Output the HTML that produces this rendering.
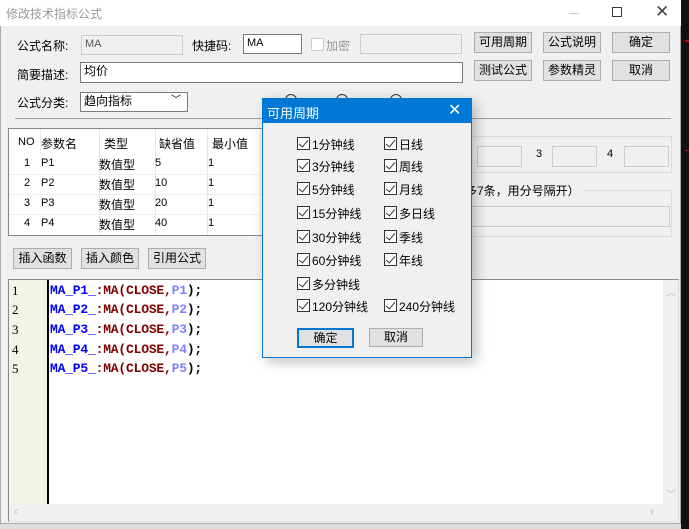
<!DOCTYPE html>
<html><head><meta charset="utf-8"><style>
*{margin:0;padding:0;box-sizing:border-box}
body{width:689px;height:529px;overflow:hidden;background:#2a2a2a;font-family:"Liberation Sans","Noto Sans CJK SC",sans-serif;font-size:12px;color:#000;position:relative}
.a{position:absolute}
.win{left:0;top:0;width:681px;height:524px;background:#f0f0f0;border:1px solid #aaa}
.tb{left:0;top:0;width:681px;height:26px;background:#fff}
.btn{position:absolute;background:#e1e1e1;border:1px solid #adadad;text-align:center;line-height:18px;font-size:12px}
.inp{position:absolute;border:1px solid #7a7a7a;background:#fff;font-size:11px;padding-left:3px;line-height:17px}
.dis{position:absolute;border:1px solid #ccc;background:#f0f0f0}
.lbl{position:absolute;font-size:12px;white-space:nowrap}
.t{position:absolute;font-size:11px;white-space:nowrap}
.cb{position:absolute;width:13px;height:13px;border:1px solid #333;background:#fff}
.cb::after{content:"";position:absolute;left:3px;top:0px;width:4px;height:8px;border:solid #333;border-width:0 1.5px 1.5px 0;transform:rotate(40deg)}
.code{position:absolute;left:50px;font-family:"Liberation Mono",monospace;font-weight:bold;font-size:13px;white-space:pre;letter-spacing:-0.2px}
.b{color:#0000ff}.r{color:#800000}.lb{color:#8080ff}
.ln{position:absolute;left:12px;font-family:"Liberation Serif",serif;font-size:13px}
</style></head><body>
<div class="a" style="left:681px;top:0;width:8px;height:529px;background:#111"></div>
<div class="a" style="left:685px;top:40px;width:4px;height:2px;background:#c00"></div>
<div class="a" style="left:685px;top:150px;width:4px;height:1px;background:#c00"></div>
<div class="a" style="left:0;top:524px;width:681px;height:5px;background:#ddd"></div>
<div class="a win"></div>
<div class="a tb"></div>
<div class="lbl" style="left:6px;top:5px;color:#999;font-size:12px">修改技术指标公式</div>
<div class="a" style="left:569px;top:13px;width:10px;height:1px;background:#ccc"></div>
<div class="a" style="left:612px;top:7px;width:10px;height:10px;border:1px solid #333"></div>
<div class="lbl" style="left:655px;top:2px;font-size:17px;color:#444">✕</div>

<div class="lbl" style="left:17px;top:37px">公式名称:</div>
<div class="inp" style="left:81px;top:35px;width:102px;height:20px;background:#f0f0f0;border-color:#ccc;color:#555">MA</div>
<div class="lbl" style="left:192px;top:37px">快捷码:</div>
<div class="inp" style="left:243px;top:34px;width:59px;height:20px">MA</div>
<div class="a" style="left:311px;top:38px;width:13px;height:13px;border:1px solid #ccc;background:#fff"></div>
<div class="lbl" style="left:326px;top:37px;color:#999">加密</div>
<div class="dis" style="left:360px;top:34px;width:102px;height:20px"></div>
<div class="btn" style="left:474px;top:32px;width:58px;height:21px">可用周期</div>
<div class="btn" style="left:543px;top:32px;width:58px;height:21px">公式说明</div>
<div class="btn" style="left:612px;top:32px;width:58px;height:21px">确定</div>
<div class="btn" style="left:474px;top:60px;width:58px;height:21px">测试公式</div>
<div class="btn" style="left:543px;top:60px;width:58px;height:21px">参数精灵</div>
<div class="btn" style="left:612px;top:60px;width:58px;height:21px">取消</div>

<div class="lbl" style="left:17px;top:66px">简要描述:</div>
<div class="inp" style="left:80px;top:62px;width:383px;height:21px;font-size:12px">均价</div>
<div class="lbl" style="left:17px;top:94px">公式分类:</div>
<div class="inp" style="left:80px;top:92px;width:108px;height:20px;font-size:12px">趋向指标<span style="position:absolute;right:6px;top:-1px;font-size:10px">﹀</span></div>
<div class="a" style="left:285px;top:94px;width:12px;height:12px;border:1px solid #333;border-radius:50%"></div>
<div class="a" style="left:336px;top:94px;width:12px;height:12px;border:1px solid #333;border-radius:50%"></div>
<div class="a" style="left:390px;top:94px;width:12px;height:12px;border:1px solid #333;border-radius:50%"></div>
<div class="a" style="left:15px;top:118px;width:656px;height:1px;background:#a0a0a0"></div>

<div class="a" style="left:8px;top:128px;width:256px;height:108px;border:1px solid #828790;background:#fff;overflow:hidden">
<div class="a" style="left:31px;top:0;width:1px;height:25px;background:#e5e5e5"></div>
<div class="a" style="left:90px;top:0;width:1px;height:108px;background:#e5e5e5"></div>
<div class="a" style="left:146px;top:0;width:1px;height:108px;background:#e5e5e5"></div>
<div class="a" style="left:198px;top:0;width:1px;height:108px;background:#e5e5e5"></div>
<div class="a" style="left:251px;top:0;width:1px;height:108px;background:#e5e5e5"></div>
<div class="a" style="left:0;top:45px;width:256px;height:1px;background:#eee"></div>
<div class="a" style="left:0;top:65px;width:256px;height:1px;background:#eee"></div>
<div class="a" style="left:0;top:85px;width:256px;height:1px;background:#eee"></div>
<div class="t" style="left:9px;top:7px">NO</div>
<div class="lbl" style="left:32px;top:6px">参数名</div>
<div class="lbl" style="left:95px;top:6px">类型</div>
<div class="lbl" style="left:150px;top:6px">缺省值</div>
<div class="lbl" style="left:203px;top:6px">最小值</div>
<div class="t" style="left:15px;top:28px">1</div><div class="t" style="left:32px;top:28px">P1</div><div class="lbl" style="left:90px;top:27px">数值型</div><div class="t" style="left:146px;top:28px">5</div><div class="t" style="left:199px;top:28px">1</div>
<div class="t" style="left:15px;top:48px">2</div><div class="t" style="left:32px;top:48px">P2</div><div class="lbl" style="left:90px;top:47px">数值型</div><div class="t" style="left:146px;top:48px">10</div><div class="t" style="left:199px;top:48px">1</div>
<div class="t" style="left:15px;top:68px">3</div><div class="t" style="left:32px;top:68px">P3</div><div class="lbl" style="left:90px;top:67px">数值型</div><div class="t" style="left:146px;top:68px">20</div><div class="t" style="left:199px;top:68px">1</div>
<div class="t" style="left:15px;top:88px">4</div><div class="t" style="left:32px;top:88px">P4</div><div class="lbl" style="left:90px;top:87px">数值型</div><div class="t" style="left:146px;top:88px">40</div><div class="t" style="left:199px;top:88px">1</div>
</div>

<div class="a" style="left:470px;top:136px;width:202px;height:37px;border:1px solid #dcdcdc"></div>
<div class="dis" style="left:477px;top:146px;width:45px;height:21px"></div>
<div class="lbl" style="left:536px;top:148px;font-size:11px">3</div>
<div class="dis" style="left:552px;top:146px;width:45px;height:21px"></div>
<div class="lbl" style="left:607px;top:148px;font-size:11px">4</div>
<div class="dis" style="left:624px;top:146px;width:45px;height:21px"></div>
<div class="a" style="left:470px;top:190px;width:202px;height:47px;border:1px solid #dcdcdc"></div>
<div class="lbl" style="left:465px;top:182px;background:#f0f0f0;padding-right:4px">多7条，用分号隔开）</div>
<div class="dis" style="left:470px;top:206px;width:200px;height:21px"></div>

<div class="btn" style="left:13px;top:248px;width:59px;height:21px">插入函数</div>
<div class="btn" style="left:81px;top:248px;width:58px;height:21px">插入颜色</div>
<div class="btn" style="left:148px;top:248px;width:58px;height:21px">引用公式</div>

<div class="a" style="left:8px;top:279px;width:671px;height:243px;border:1px solid #888;border-right-color:#ddd;border-bottom-color:#ddd;background:#f0f0f0"></div>
<div class="a" style="left:9px;top:280px;width:654px;height:224px;background:#fff"></div>
<div class="a" style="left:9px;top:280px;width:39px;height:224px;background:#f3f3e6"></div>
<div class="a" style="left:47px;top:280px;width:2px;height:224px;background:#000"></div>
<div class="lbl" style="left:666px;top:284px;color:#bbb;font-size:10px">︿</div>
<div class="lbl" style="left:666px;top:486px;color:#bbb;font-size:10px">﹀</div>
<div class="lbl" style="left:14px;top:504px;color:#bbb;font-size:12px">‹</div>
<div class="lbl" style="left:650px;top:504px;color:#bbb;font-size:12px">›</div>
<div class="ln" style="top:283px">1</div><div class="ln" style="top:302px">2</div><div class="ln" style="top:322px">3</div><div class="ln" style="top:342px">4</div><div class="ln" style="top:361px">5</div>
<div class="code" style="top:283px"><span class="b">MA_P1_</span><span class="r">:MA(CLOSE,</span><span class="lb">P1</span>);</div>
<div class="code" style="top:302px"><span class="b">MA_P2_</span><span class="r">:MA(CLOSE,</span><span class="lb">P2</span>);</div>
<div class="code" style="top:322px"><span class="b">MA_P3_</span><span class="r">:MA(CLOSE,</span><span class="lb">P3</span>);</div>
<div class="code" style="top:342px"><span class="b">MA_P4_</span><span class="r">:MA(CLOSE,</span><span class="lb">P4</span>);</div>
<div class="code" style="top:361px"><span class="b">MA_P5_</span><span class="r">:MA(CLOSE,</span><span class="lb">P5</span>);</div>

<!-- dialog -->
<div class="a" style="left:262px;top:98px;width:210px;height:260px;background:#f0f0f0;border:1px solid #0078d7;box-shadow:4px 4px 12px rgba(0,0,0,.25)"></div>
<div class="a" style="left:262px;top:98px;width:210px;height:25px;background:#0078d7"></div>
<div class="lbl" style="left:267px;top:103px;color:#fff;font-size:13px">可用周期</div>
<div class="lbl" style="left:448px;top:100px;color:#fff;font-size:16px">✕</div>

<div class="cb" style="left:297px;top:137px"></div><div class="lbl" style="left:312px;top:136px">1分钟线</div>
<div class="cb" style="left:384px;top:137px"></div><div class="lbl" style="left:399px;top:136px">日线</div>
<div class="cb" style="left:297px;top:159px"></div><div class="lbl" style="left:312px;top:158px">3分钟线</div>
<div class="cb" style="left:384px;top:159px"></div><div class="lbl" style="left:399px;top:158px">周线</div>
<div class="cb" style="left:297px;top:182px"></div><div class="lbl" style="left:312px;top:181px">5分钟线</div>
<div class="cb" style="left:384px;top:182px"></div><div class="lbl" style="left:399px;top:181px">月线</div>
<div class="cb" style="left:297px;top:206px"></div><div class="lbl" style="left:312px;top:205px">15分钟线</div>
<div class="cb" style="left:384px;top:206px"></div><div class="lbl" style="left:399px;top:205px">多日线</div>
<div class="cb" style="left:297px;top:230px"></div><div class="lbl" style="left:312px;top:229px">30分钟线</div>
<div class="cb" style="left:384px;top:230px"></div><div class="lbl" style="left:399px;top:229px">季线</div>
<div class="cb" style="left:297px;top:253px"></div><div class="lbl" style="left:312px;top:252px">60分钟线</div>
<div class="cb" style="left:384px;top:253px"></div><div class="lbl" style="left:399px;top:252px">年线</div>
<div class="cb" style="left:297px;top:277px"></div><div class="lbl" style="left:312px;top:276px">多分钟线</div>
<div class="cb" style="left:297px;top:299px"></div><div class="lbl" style="left:312px;top:298px">120分钟线</div>
<div class="cb" style="left:384px;top:299px"></div><div class="lbl" style="left:399px;top:298px">240分钟线</div>
<div class="btn" style="left:297px;top:328px;width:57px;height:20px;border:2px solid #0078d7;line-height:16px">确定</div>
<div class="btn" style="left:369px;top:328px;width:54px;height:19px;line-height:17px">取消</div>
</body></html>
